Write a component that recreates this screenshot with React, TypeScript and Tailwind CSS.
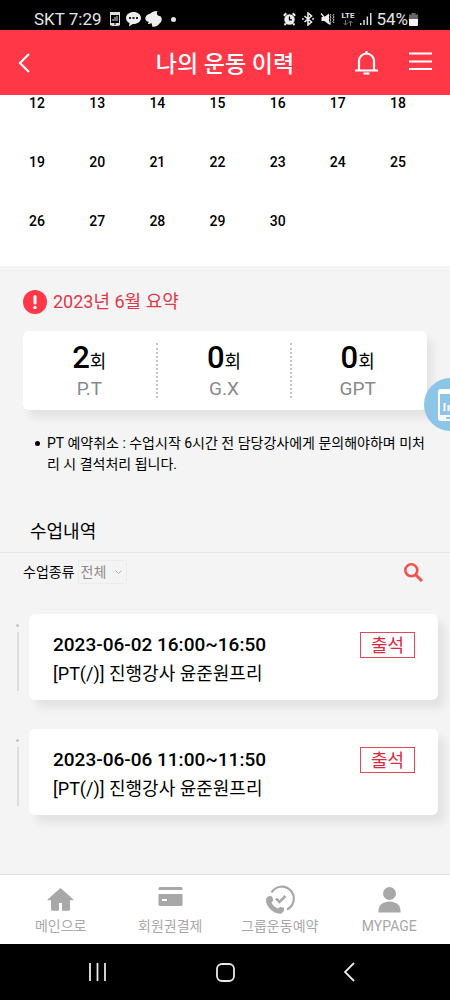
import React from "react";

interface Lesson {
  time: string;
  title: string;
  status: string;
}

const days = [12, 13, 14, 15, 16, 17, 18, 19, 20, 21, 22, 23, 24, 25, 26, 27, 28, 29, 30];

const summary = [
  { label: "P.T", count: 2 },
  { label: "G.X", count: 0 },
  { label: "GPT", count: 0 },
];

const lessons: Lesson[] = [
  { time: "2023-06-02 16:00~16:50", title: "[PT(/)] 진행강사 윤준원프리", status: "출석" },
  { time: "2023-06-06 11:00~11:50", title: "[PT(/)] 진행강사 윤준원프리", status: "출석" },
];

function StatusBar() {
  return (
    <div className="flex h-[30px] items-center justify-between bg-black pt-2 pr-8 pl-[34px] text-[17px] leading-none text-[#e4e4e4]">
      <div className="flex items-center">
        <span>SKT 7:29</span>
        <svg className="ml-2 h-[14px] w-[10px]" viewBox="0 0 10 14">
          <rect x="0.5" y="0.5" width="9" height="13" rx="1" fill="none" stroke="#ddd" />
          <path d="M0 0h10v3H0zM0 11h10v2H0z" fill="#ddd" />
          <path d="M3 9V7M5 9V5M7 9V4" stroke="#ddd" />
          <path d="M4 12h2" stroke="#000" />
        </svg>
        <svg className="ml-[6px] h-4 w-[15px]" viewBox="0 0 15 16">
          <path d="M7.500 1C3.400 1 0 3.600 0 7c0 2.200 1.400 4 3.500 5.100L3 15.500 6.700 13h.8C11.600 13 15 10.400 15 7S11.600 1 7.500 1z" fill="#eee" />
          <path d="M3 6h2v2H3zM6.500 6h2v2h-2zM10 6h2v2h-2z" fill="#222" />
        </svg>
        <svg className="ml-1 h-4 w-[17px]" viewBox="0 0 17 16">
          <path d="M12.500 0C8 .3 6 1.300 5.500 2.500 2.500 3 .3 5 .3 7.500c0 2 1.500 3 3.500 3.200L3 13c1.500 0 2.500-.3 3.500-1l1 4c4-.5 6.500-2 7-3.500 1.500-1 2.300-2.700 2.300-4.500 0-2-1.500-3.200-3.800-3.500C11.500 3 11.500 1.500 12.500 0z" fill="#eee" />
        </svg>
        <span className="ml-[9px] size-[5px] rounded-full bg-[#e4e4e4]" />
      </div>
      <div className="flex items-center">
        <svg className="h-[14px] w-[13px]" viewBox="0 0 13 14">
          <circle cx="6.500" cy="7.500" r="5.200" fill="#eee" />
          <path d="M.8 3.800 3.300 1.300M12.200 3.800 9.700 1.300M2.800 11.500 1.500 13M10.200 11.500l1.300 1.500" stroke="#eee" strokeWidth="2" />
          <path d="M6.500 4.500v3.300H9" stroke="#000" strokeWidth="1.300" fill="none" />
        </svg>
        <svg className="ml-[6px] h-[14px] w-3" viewBox="0 0 12 14" fill="none" stroke="#eee" strokeWidth="1.600">
          <path d="m2.500 4 7 6L6 13V1l3.500 3-7 6" />
          <path d="M0 7h1.800M10.200 7H12" />
        </svg>
        <svg className="ml-[6px] h-[14px] w-[15px]" viewBox="0 0 15 14">
          <path d="M1.500 5h2.800L9 1.500v11L4.300 9H1.500z" fill="#eee" />
          <path d="m1 1.500 9.500 11" stroke="#eee" strokeWidth="1.300" />
          <path d="m11 2-1 1.500 1 1.500-1 1.500L11 8l-1 1.500 1 1.500M14 2l-1 1.500 1 1.500-1 1.500L14 8l-1 1.500 1 1.500" stroke="#ccc" fill="none" />
        </svg>
        <div className="ml-[5px] flex w-[15px] flex-col items-center">
          <span className="text-[8px] leading-[8px] font-bold">LTE</span>
          <svg className="h-[6px] w-[10px]" viewBox="0 0 10 6" fill="none" stroke="#777">
            <path d="M2.500 0v5M.5 3l2 2 2-2M7.500 6V1M5.500 3l2-2 2 2" />
          </svg>
        </div>
        <svg className="ml-[5px] h-3 w-3" viewBox="0 0 12 12" fill="#ddd">
          <path d="M0 10h1.500v2H0zM3.300 7h1.500v5H3.300zM6.600 3.500h1.500V12H6.600zM10 0h1.500v12H10z" />
        </svg>
        <span className="ml-1 text-[17px] leading-none">54%</span>
        <svg className="ml-[1px] h-[13px] w-[9px]" viewBox="0 0 9 13">
          <path d="M2.500 0h4v1.500H9V6H0V1.500h2.500z" fill="#666" />
          <path d="M0 6h9v6a1 1 0 0 1-1 1H1a1 1 0 0 1-1-1z" fill="#f4f4f4" />
        </svg>
      </div>
    </div>
  );
}

function Header() {
  return (
    <header className="grid h-[65px] grid-cols-[1fr_auto_1fr] items-center bg-[#ff3746] px-[18px] text-white">
      <button aria-label="뒤로" className="flex size-7 items-center">
        <svg className="h-5 w-3" viewBox="0 0 12 20" fill="none" stroke="currentColor" strokeWidth="2.200">
          <path d="M11 1 2 10l9 9" />
        </svg>
      </button>
      <h1 className="pt-1 text-[23px] leading-8 font-medium">나의 운동 이력</h1>
      <div className="flex items-center justify-end gap-[31px]">
        <button aria-label="알림">
          <svg className="h-6 w-[23px]" viewBox="0 0 23 24" fill="none" stroke="currentColor" strokeWidth="2.200">
            <path d="M4 19.500V10a7.500 7.500 0 0 1 15 0v9.500M0 19.500h23M11.500 0v3" />
            <path d="M8.500 22.500h6" />
          </svg>
        </button>
        <button aria-label="메뉴">
          <svg className="h-6 w-[23px]" viewBox="0 0 23 24" stroke="currentColor" strokeWidth="2.200">
            <path d="M0 2.500h23M0 10.500h23M0 18h23" />
          </svg>
        </button>
      </div>
    </header>
  );
}

function Summary() {
  return (
    <section className="px-[23px] pt-[22px]">
      <h2 className="flex items-center gap-[6px] text-[18px] leading-7 text-[#e0384a]">
        <svg className="size-6" viewBox="0 0 24 24">
          <circle cx="12" cy="12" r="12" fill="#ff3746" />
          <path d="M12 6.500v6.500" stroke="#fff" strokeWidth="3" strokeLinecap="round" />
          <circle cx="12" cy="17.500" r="1.700" fill="#fff" />
        </svg>
        2023년 6월 요약
      </h2>
      <div className="mt-[15px] grid grid-cols-3 rounded-md bg-white py-3 shadow-[6px_8px_8px_rgba(0,0,0,0.07)]">
        {summary.map((item) => (
          <div
            key={item.label}
            className="flex h-[55px] flex-col items-center border-r-2 border-dotted border-[#c4c4c4] last:border-r-0 last:pr-1"
          >
            <p className="text-[18px] leading-[30px] text-black">
              <span className="text-[31px] font-medium">{item.count}</span>회
            </p>
            <p className="text-[19px] leading-6 text-[#8a8a8a]">{item.label}</p>
          </div>
        ))}
      </div>
      <ul className="mt-[23px] pl-3 text-[14px] leading-[21px] text-black">
        <li className="flex gap-[7px]">
          <span className="mt-2 size-[5px] shrink-0 rounded-full bg-black" />
          PT 예약취소 : 수업시작 6시간 전 담당강사에게 문의해야하며 미처리 시 결석처리 됩니다.
        </li>
      </ul>
    </section>
  );
}

function LessonCard({ time, title, status }: Lesson) {
  return (
    <li className="flex pr-3 pl-4">
      <div className="flex w-[13px] flex-col pt-[10px]">
        <span className="size-[3px] rounded-full bg-[#c4c4c4]" />
        <span className="mt-[5px] ml-px h-[59px] w-[2px] bg-[#dcdcdc]" />
      </div>
      <div className="flex flex-1 items-start justify-between rounded-md bg-white pt-[17px] pr-[23px] pb-3 pl-6 shadow-[7px_8px_8px_rgba(0,0,0,0.07)]">
        <div className="text-[18px] leading-7 text-black">
          <p className="text-[19px] leading-7 font-medium">{time}</p>
          <p className="pt-px">{title}</p>
        </div>
        <span className="mt-px border border-[#e04a58] px-[10px] pt-px text-[18px] leading-[23px] text-[#e0283c]">{status}</span>
      </div>
    </li>
  );
}

function BottomNav() {
  const items = [
    {
      label: "메인으로",
      icon: (
        <path d="M13.500 3 .8 14.300c-.5.500-.2 1 .4 1H4v9a1.500 1.500 0 0 0 1.500 1.500H12V18h3v7.800h6.500a1.500 1.500 0 0 0 1.500-1.500v-9h2.800c.6 0 .9-.5.400-1z" />
      ),
    },
    {
      label: "회원권결제",
      icon: (
        <path d="M3 2h21a1.500 1.500 0 0 1 1.500 1.500V5h-24V3.500A1.500 1.500 0 0 1 3 2zM1.500 9h24v10.500A1.500 1.500 0 0 1 24 21H3a1.500 1.500 0 0 1-1.500-1.500zM5 14v2h5v-2z" />
      ),
    },
    {
      label: "그룹운동예약",
      icon: (
        <>
          <path d="M5.500 7.500A12 12 0 1 1 21 24.500" fill="none" stroke="currentColor" strokeWidth="2.200" />
          <path d="m10 13.500 3.500 3.500 6-6" fill="none" stroke="currentColor" strokeWidth="2.600" />
          <path d="M1 12.500c1.500-1.500 4-1.800 5.300-.8l.9 3.800-1.700 2c1.200 3 3.500 5 6.500 6l2.500-1.700 3.500 1.200c.6 1.700-.3 4.300-2.500 5.500C8.500 30 0 22 0 15.500c0-1.200.3-2.300 1-3z" />
        </>
      ),
    },
    {
      label: "MYPAGE",
      icon: (
        <>
          <circle cx="13.500" cy="8.500" r="6.500" />
          <path d="M2.500 27.500V26c0-6 4.500-9.500 11-9.500s11 3.500 11 9.500v1.500z" />
        </>
      ),
    },
  ];

  return (
    <nav className="grid grid-cols-4 border-t border-[#e2e2e2] bg-white px-[6px] pt-[10px] pb-2 text-[#a8a8a8]">
      {items.map((item) => (
        <a key={item.label} href="#" className="flex flex-col items-center">
          <svg className="h-[30px] w-[27px] overflow-visible" viewBox="0 0 27 30" fill="currentColor">
            {item.icon}
          </svg>
          <span className="mt-px text-[14px] leading-5">{item.label}</span>
        </a>
      ))}
    </nav>
  );
}

function SystemNav() {
  return (
    <div className="grid h-14 grid-cols-[106px_1fr_106px] items-center bg-black text-[#e8e8e8]">
      <button aria-label="최근 앱" className="justify-self-end">
        <svg className="h-[18px] w-[17px]" viewBox="0 0 17 18" stroke="currentColor" strokeWidth="1.800">
          <path d="M1 0v18M8.500 0v18M16 0v18" />
        </svg>
      </button>
      <button aria-label="홈" className="justify-self-center">
        <svg className="size-[19px]" viewBox="0 0 19 19" fill="none" stroke="currentColor" strokeWidth="1.800">
          <rect x="1" y="1" width="17" height="17" rx="5" />
        </svg>
      </button>
      <button aria-label="뒤로 가기" className="justify-self-start">
        <svg className="h-5 w-[11px]" viewBox="0 0 11 20" fill="none" stroke="currentColor" strokeWidth="1.800">
          <path d="m10 1-9 9 9 9" />
        </svg>
      </button>
    </div>
  );
}

export default function App() {
  return (
    <div className="relative flex min-h-screen flex-col overflow-hidden bg-[#f4f4f4] font-[Roboto,'Noto_Sans_CJK_KR',sans-serif]">
      <StatusBar />
      <Header />
      <main className="flex-1">
        <div className="grid grid-cols-7 gap-y-[43px] bg-white pr-[22px] pb-[37px] pl-[7px] text-center text-[14px] leading-4 font-medium text-black">
          {days.map((day) => (
            <span key={day}>{day}</span>
          ))}
        </div>

        <Summary />

        <section className="pt-[43px]">
          <h2 className="border-b border-[#e6e6e6] px-[30px] pb-[6px] text-[18px] leading-7 text-black">수업내역</h2>
          <div className="flex items-center justify-between pt-[7px] pr-[27px] pl-[23px]">
            <div className="flex items-center gap-[3px] text-[14px]">
              <label htmlFor="lesson-type" className="text-black">수업종류</label>
              <div className="relative">
                <select
                  id="lesson-type"
                  className="block h-6 w-[49px] appearance-none border border-[#ececec] bg-transparent pl-[2px] leading-5 text-[#8a8a8a]"
                >
                  <option>전체</option>
                </select>
                <svg
                  className="pointer-events-none absolute top-[10px] right-[5px] h-1 w-[7px]"
                  viewBox="0 0 7 4"
                  fill="none"
                  stroke="#b0b0b0"
                >
                  <path d="m.5.500 3 3 3-3" />
                </svg>
              </div>
            </div>
            <button aria-label="검색" className="text-[#ef5350]">
              <svg className="size-[19px]" viewBox="0 0 19 19" fill="none" stroke="currentColor" strokeWidth="2.600">
                <circle cx="7.300" cy="7.300" r="6" />
                <path d="m11.700 11.700 6.300 6.300" strokeWidth="3" />
              </svg>
            </button>
          </div>
          <ul className="flex flex-col gap-[29px] pt-[30px] pb-10">
            {lessons.map((lesson) => (
              <LessonCard key={lesson.time} {...lesson} />
            ))}
          </ul>
        </section>
      </main>
      <BottomNav />
      <SystemNav />

      {/* floating capture button, half off the right edge */}
      <button
        aria-label="화면 도구"
        className="absolute top-[378px] -right-[27px] flex size-[53px] items-center rounded-full bg-[#8cc5e8] pl-[14px]"
      >
        <svg className="h-8 w-6" viewBox="0 0 24 32">
          <rect width="24" height="32" rx="3" fill="#fff" />
          <path d="M2 5h20v21H2z" fill="#8cc5e8" />
          <path d="M6.500 22v-8M10.500 22v-6M14.500 22V11" stroke="#fff" strokeWidth="2" />
          <path d="M8 29h8" stroke="#8cc5e8" strokeWidth="2" />
        </svg>
      </button>
    </div>
  );
}
